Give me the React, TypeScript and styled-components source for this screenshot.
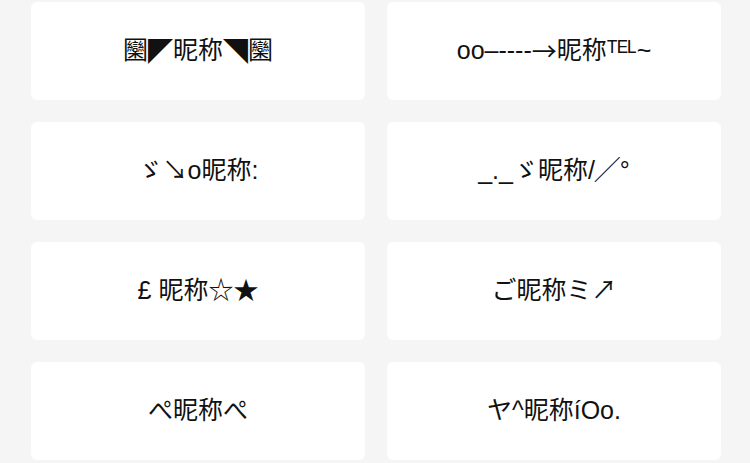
import styled, { createGlobalStyle } from "styled-components";

const GlobalStyle = createGlobalStyle`
  html, body {
    margin: 0;
    padding: 0;
    background: #f5f5f5;
  }
  body {
    font-family: "Liberation Sans", "Noto Sans CJK SC", sans-serif;
  }
`;

const NameGrid = styled.div`
  display: grid;
  grid-template-columns: 334px 334px;
  column-gap: 22px;
  row-gap: 22px;
  padding: 2px 0 0 31px;
`;

const NameCard = styled.div`
  height: 98px;
  background: #ffffff;
  border-radius: 6px;
  display: flex;
  align-items: center;
  justify-content: center;
  font-size: 25px;
  line-height: 1;
  padding-bottom: 2px;
  box-sizing: border-box;
  color: #111111;
  white-space: nowrap;
`;

// symbols that the Latin face draws too small
const Wide = styled.span`
  font-family: "Noto Sans CJK SC", sans-serif;
`;

const names = [
  <>圞<Wide>◤</Wide>昵称<Wide>◥</Wide>圞</>,
  <>oo–----<Wide>→</Wide>昵称ᵀᴱᴸ~</>,
  <>ゞ↘o昵称:</>,
  <>_._ゞ昵称/╱°</>,
  <>£ 昵称☆★</>,
  <>ご昵称ミ↗</>,
  <>ぺ昵称ぺ</>,
  <>ヤ^昵称íOo.</>,
];

export default function App() {
  return (
    <>
      <GlobalStyle />
      <NameGrid>
        {names.map((name, i) => (
          <NameCard key={i}>{name}</NameCard>
        ))}
      </NameGrid>
    </>
  );
}
